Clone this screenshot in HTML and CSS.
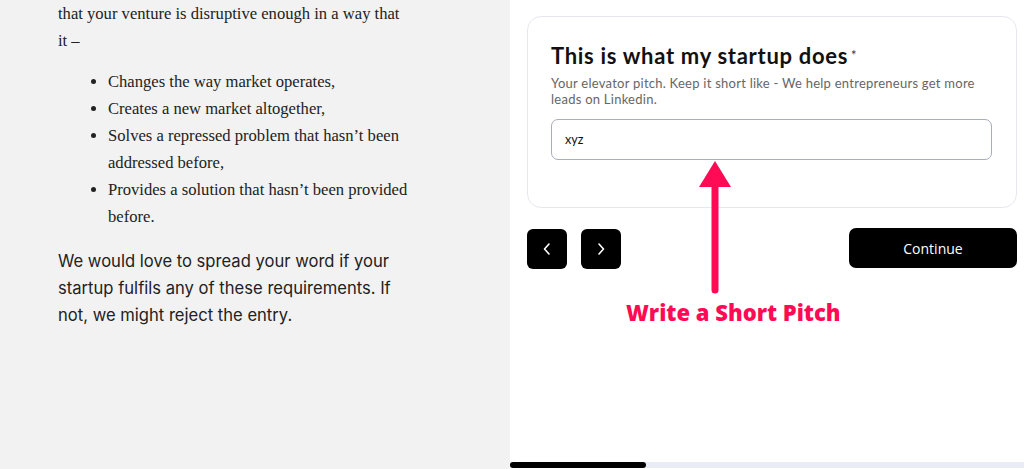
FILE: index.html
```html
<!DOCTYPE html>
<html lang="en">
<head>
<meta charset="utf-8">
<title>Startup form</title>
<link rel="stylesheet" href="styles.css">
</head>
<body>
<div class="page">
  <section class="article">
    <p class="serif">that your venture is disruptive enough in a way that it –</p>
    <ul class="serif list">
      <li>Changes the way market operates,</li>
      <li>Creates a new market altogether,</li>
      <li>Solves a repressed problem that hasn’t been addressed before,</li>
      <li>Provides a solution that hasn’t been provided before.</li>
    </ul>
    <p class="sans">We would love to spread your word if your startup fulfils any of these requirements. If not, we might reject the entry.</p>
  </section>
  <section class="form-pane">
    <div class="card">
      <h2 class="q-title">This is what my startup does<span class="req">*</span></h2>
      <p class="q-help">Your elevator pitch. Keep it short like - We help entrepreneurs get more leads on Linkedin.</p>
      <div class="field">xyz</div>
    </div>
    <div class="nav">
      <button class="icon-btn" aria-label="Previous">
        <svg width="12" height="14" viewBox="0 0 12 14"><path d="M8 2 L3.5 7 L8 12" fill="none" stroke="#fff" stroke-width="1.6" stroke-linecap="round" stroke-linejoin="round"/></svg>
      </button>
      <button class="icon-btn" aria-label="Next">
        <svg width="12" height="14" viewBox="0 0 12 14"><path d="M4 2 L8.5 7 L4 12" fill="none" stroke="#fff" stroke-width="1.6" stroke-linecap="round" stroke-linejoin="round"/></svg>
      </button>
      <div class="spacer"></div>
      <button class="continue">Continue</button>
    </div>
    <div class="fill"></div>
    <div class="progress"><div class="progress-bar" style="width:136px"></div></div>
    <svg class="arrow" width="34" height="134" viewBox="0 0 34 134">
      <path d="M17 0 L33 26 L1 26 Z" fill="#ff0a54"/>
      <line x1="17" y1="20" x2="17" y2="129" stroke="#ff0a54" stroke-width="7" stroke-linecap="round"/>
    </svg>
    <div class="callout">Write a Short Pitch</div>
  </section>
</div>
</body>
</html>
```

FILE: styles.css
```css
html, body {
  margin: 0;
  padding: 0;
  height: 100%;
  overflow: hidden;
}
.page {
  display: flex;
  height: 469px;
}
.article {
  width: 452px;
  background: #f2f2f2;
  padding: 0 0 0 58px;
  color: #222;
}
.serif {
  font-family: "Liberation Serif", "Times New Roman", serif;
  font-size: 16.6px;
  line-height: 27px;
  margin: 0;
  width: 350px;
}
.list {
  margin: 14px 0 0 0;
  padding-left: 50px;
  width: 310px;
}
.sans {
  font-family: Inter, "Noto Sans", sans-serif;
  font-size: 16.6px;
  line-height: 27px;
  margin: 18px 0 0 0;
  width: 345px;
  color: #222;
}
.form-pane {
  position: relative;
  flex: 1;
  background: #fff;
  padding: 16px 7px 0 17px;
  display: flex;
  flex-direction: column;
}
.card {
  border: 1px solid #e6e8ee;
  border-radius: 14px;
  padding: 25px 24px 47px 23px;
}
.q-title {
  margin: 0;
  font-family: Lato, "Noto Sans", sans-serif;
  font-weight: 700;
  font-size: 22px;
  line-height: 26px;
  color: #111;
  letter-spacing: 0.7px;
}
.req {
  font-size: 13px;
  font-weight: 400;
  vertical-align: 4px;
  margin-left: 3px;
  color: #333;
}
.q-help {
  margin: 6px 0 0 0;
  font-family: Lato, "Noto Sans", sans-serif;
  font-size: 13px;
  line-height: 16px;
  color: #666;
  letter-spacing: 0.25px;
  width: 430px;
}
.field {
  box-sizing: border-box;
  margin-top: 12px;
  height: 41px;
  border: 1px solid #a9adb8;
  border-radius: 7px;
  display: flex;
  align-items: center;
  padding-left: 13px;
  font-family: Lato, "Noto Sans", sans-serif;
  font-size: 12.5px;
  color: #111;
}
.nav {
  display: flex;
  align-items: flex-start;
  margin-top: 21px;
}
.icon-btn {
  width: 40px;
  height: 40px;
  border: 0;
  border-radius: 6px;
  background: #000;
  display: flex;
  align-items: center;
  justify-content: center;
  padding: 0;
  margin-right: 14px;
}
.spacer {
  flex: 1;
}
.continue {
  width: 168px;
  height: 40px;
  margin-top: -1px;
  border: 0;
  border-radius: 7px;
  background: #000;
  color: #fff;
  font-family: "Open Sans", "Noto Sans", sans-serif;
  font-size: 14px;
}
.fill {
  flex: 1;
}
.progress {
  margin: 0 -7px 1px -17px;
  height: 6px;
  background: #e9ecf5;
}
.progress-bar {
  height: 6px;
  background: #000;
  border-radius: 3px;
}
.arrow {
  position: absolute;
  left: 188px;
  top: 161px;
}
.callout {
  position: absolute;
  left: 116px;
  top: 297px;
  font-family: "Open Sans", "Noto Sans", sans-serif;
  font-weight: 800;
  font-size: 22px;
  line-height: 30px;
  color: #ff0a54;
}
```
